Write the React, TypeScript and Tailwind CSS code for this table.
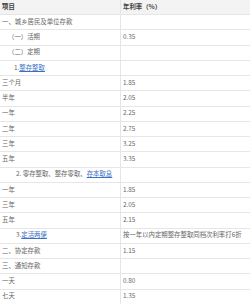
type Row = {
  label: React.ReactNode;
  rate?: React.ReactNode;
  indent?: string;
};

const link = "text-[#3a6fc4] underline";

const rows: Row[] = [
  { label: "一、城乡居民及单位存款" },
  { label: "（一）活期", rate: "0.35", indent: "pl-[8px]" },
  { label: "（二）定期", indent: "pl-[8px]" },
  {
    label: (
      <>
        1. <span className={link}>整存整取</span>
      </>
    ),
    indent: "pl-[14px]",
  },
  { label: "三个月", rate: "1.85" },
  { label: "半年", rate: "2.05" },
  { label: "一年", rate: "2.25" },
  { label: "二年", rate: "2.75" },
  { label: "三年", rate: "3.25" },
  { label: "五年", rate: "3.35" },
  {
    label: (
      <>
        2. 零存整取、整存零取、<span className={link}>存本取息</span>
      </>
    ),
    indent: "pl-[16px]",
  },
  { label: "一年", rate: "1.85" },
  { label: "三年", rate: "2.05" },
  { label: "五年", rate: "2.15" },
  {
    label: (
      <>
        3. <span className={link}>定活两便</span>
      </>
    ),
    rate: "按一年以内定期整存整取同档次利率打6折",
    indent: "pl-[16px]",
  },
  { label: "二、协定存款", rate: "1.15" },
  { label: "三、通知存款" },
  { label: "一天", rate: "0.80" },
  { label: "七天", rate: "1.35" },
];

export default function App() {
  return (
    <div
      className="w-[250px] h-[304px] overflow-hidden bg-white text-[6.4px] leading-none text-[#666]"
      style={{ fontFamily: '"Noto Sans CJK SC", "Noto Sans", sans-serif' }}
    >
      <div className="flex h-[15px] bg-[#f3f3f3] border-b border-[#e6e6e6] font-bold text-[#444]">
        <div className="w-[121px] shrink-0 border-r border-[#e6e6e6] pl-[2px] flex items-center">
          项目
        </div>
        <div className="flex-1 pl-[2px] flex items-center">年利率（%）</div>
      </div>
      {rows.map((r, i) => (
        <div key={i} className="flex h-[15.25px] border-b border-[#e6e6e6]">
          <div
            className={`w-[121px] shrink-0 border-r border-[#e6e6e6] flex items-center whitespace-nowrap ${
              r.indent ?? "pl-[2px]"
            }`}
          >
            {r.label}
          </div>
          <div className="flex-1 pl-[2px] flex items-center whitespace-nowrap">{r.rate}</div>
        </div>
      ))}
    </div>
  );
}
